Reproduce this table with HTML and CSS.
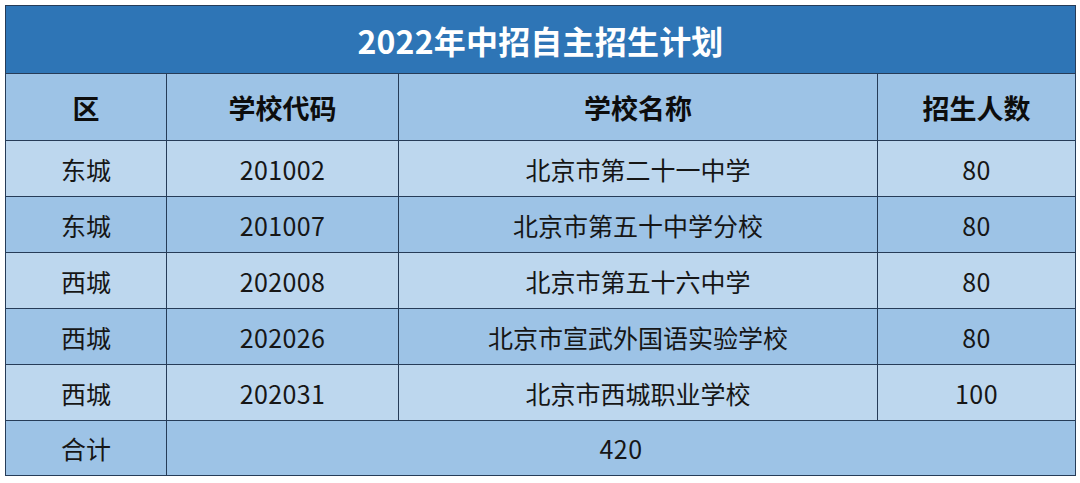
FILE: index.html
```html
<!DOCTYPE html>
<html lang="zh">
<head>
<meta charset="utf-8">
<link rel="stylesheet" href="styles.css">
</head>
<body>
<table class="plan">
  <colgroup>
    <col class="c1"><col class="c2"><col class="c3"><col class="c4">
  </colgroup>
  <thead>
    <tr class="title"><th colspan="4">2022年中招自主招生计划</th></tr>
    <tr class="head"><th>区</th><th>学校代码</th><th>学校名称</th><th>招生人数</th></tr>
  </thead>
  <tbody>
    <tr class="light"><td>东城</td><td class="num">201002</td><td>北京市第二十一中学</td><td class="num">80</td></tr>
    <tr class="dark"><td>东城</td><td class="num">201007</td><td>北京市第五十中学分校</td><td class="num">80</td></tr>
    <tr class="light"><td>西城</td><td class="num">202008</td><td>北京市第五十六中学</td><td class="num">80</td></tr>
    <tr class="dark"><td>西城</td><td class="num">202026</td><td>北京市宣武外国语实验学校</td><td class="num">80</td></tr>
    <tr class="light"><td>西城</td><td class="num">202031</td><td>北京市西城职业学校</td><td class="num">100</td></tr>
    <tr class="dark total"><td>合计</td><td class="num" colspan="3">420</td></tr>
  </tbody>
</table>
</body>
</html>
```
FILE: styles.css
```css
html, body {
  margin: 0;
  padding: 0;
  background: #ffffff;
}
body {
  padding: 5px 0 0 5px;
  font-family: "Noto Sans CJK SC", "Noto Sans", sans-serif;
}
.plan {
  border-collapse: collapse;
  table-layout: fixed;
  width: 1070px;
  color: #161616;
}
.c1 { width: 161px; }
.c2 { width: 232px; }
.c3 { width: 479px; }
.c4 { width: 198px; }
.plan th, .plan td {
  border: 1.5px solid #263c58;
  text-align: center;
  padding: 0;
  vertical-align: middle;
}
.title th {
  height: 67px;
  background: #2e75b6;
  color: #ffffff;
  font-size: 32px;
  font-weight: 700;
  letter-spacing: 0.2px;
}
.head th {
  height: 66px;
  background: #9dc3e6;
  font-size: 27px;
  font-weight: 700;
  color: #0d0d0d;
}
.plan td {
  height: 55px;
  font-size: 25px;
  font-weight: 400;
}
.plan td.num {
  letter-spacing: 0.4px;
}
.light td { background: #bdd7ee; }
.dark td { background: #9dc3e6; }
.total td { height: 54px; }
```
